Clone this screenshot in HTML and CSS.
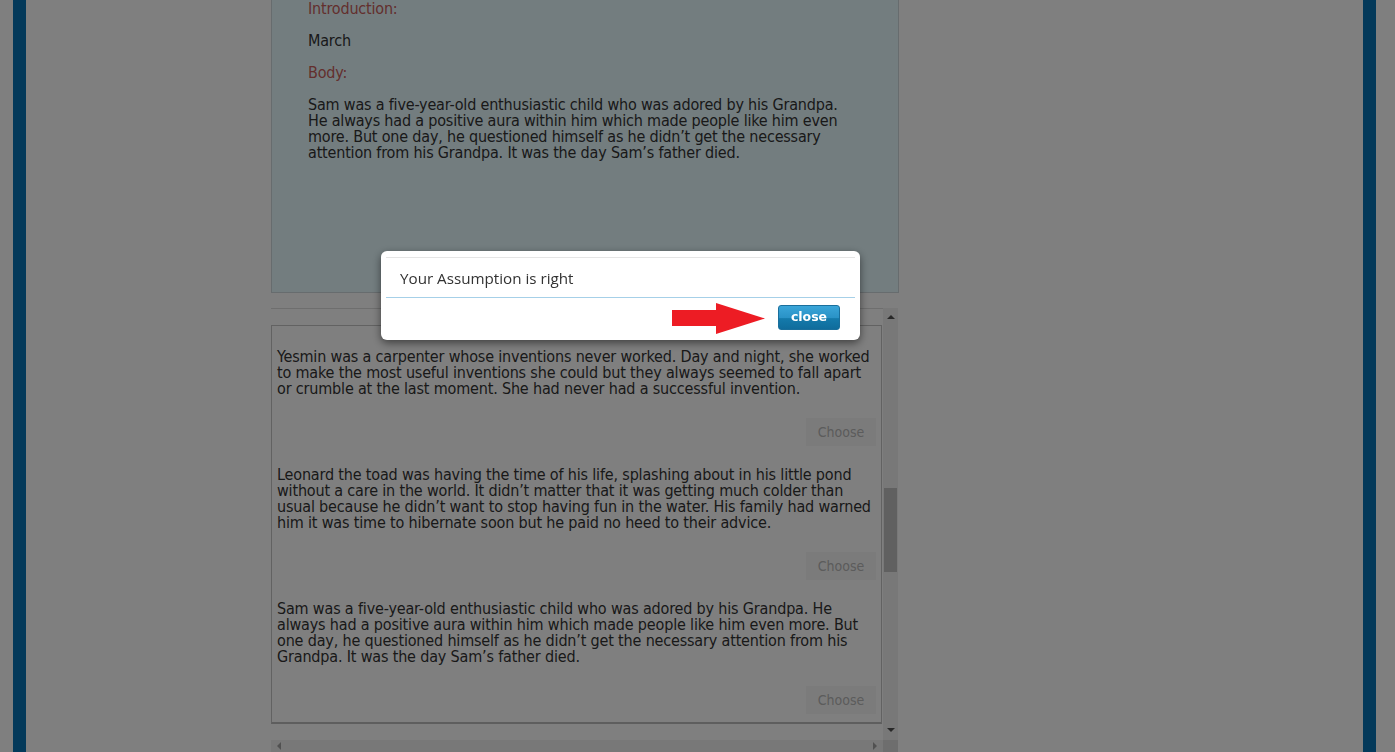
FILE: index.html
```html
<!DOCTYPE html>
<html>
<head>
<meta charset="utf-8">
<title>Story assumption</title>
<link rel="stylesheet" href="styles.css">
</head>
<body>
<div class="page">
  <div class="column">
    <section class="story">
      <p class="label">Introduction:</p>
      <p class="text">March</p>
      <p class="label">Body:</p>
      <p class="text">Sam was a five-year-old enthusiastic child who was adored by his Grandpa. He always had a positive aura within him which made people like him even more. But one day, he questioned himself as he didn’t get the necessary attention from his Grandpa. It was the day Sam’s father died.</p>
    </section>
    <section class="choices">
      <div class="choices-view">
        <div class="choice-box">
          <div class="choice">
            <p class="choice-text">Yesmin was a carpenter whose inventions never worked. Day and night, she worked to make the most useful inventions she could but they always seemed to fall apart or crumble at the last moment. She had never had a successful invention.</p>
            <div class="choice-actions"><button class="choose">Choose</button></div>
          </div>
          <div class="choice">
            <p class="choice-text">Leonard the toad was having the time of his life, splashing about in his little pond without a care in the world. It didn’t matter that it was getting much colder than usual because he didn’t want to stop having fun in the water. His family had warned him it was time to hibernate soon but he paid no heed to their advice.</p>
            <div class="choice-actions"><button class="choose">Choose</button></div>
          </div>
          <div class="choice">
            <p class="choice-text">Sam was a five-year-old enthusiastic child who was adored by his Grandpa. He always had a positive aura within him which made people like him even more. But one day, he questioned himself as he didn’t get the necessary attention from his Grandpa. It was the day Sam’s father died.</p>
            <div class="choice-actions"><button class="choose">Choose</button></div>
          </div>
        </div>
      </div>
      <div class="vscroll">
        <span class="arrow-up"></span>
        <div class="vtrack"><div class="vthumb"></div></div>
        <span class="arrow-down"></span>
      </div>
      <div class="hscroll">
        <span class="arrow-left"></span>
        <span class="arrow-right"></span>
      </div>
      <div class="corner"></div>
    </section>
  </div>
</div>

<div class="backdrop"></div>

<div class="modal">
  <div class="modal-header"></div>
  <div class="modal-body">Your Assumption is right</div>
  <div class="modal-footer">
    <svg class="pointer" width="94" height="31" viewBox="0 0 94 31" aria-hidden="true">
      <rect x="0" y="7" width="50" height="16" fill="#ed1c24"/>
      <polygon points="44,0 93,15.5 44,31" fill="#ed1c24"/>
    </svg>
    <button class="close-btn">close</button>
  </div>
</div>
</body>
</html>
```

FILE: styles.css
```css
html, body {
  margin: 0;
  padding: 0;
  background: #ffffff;
  height: 752px;
  overflow: hidden;
}

.page {
  margin: 0 19px 0 13px;
  border-left: 13px solid #0672b4;
  border-right: 13px solid #0672b4;
  height: 752px;
  background: #ffffff;
  display: flex;
  padding-left: 245px;
  box-sizing: border-box;
}

.column {
  width: 628px;
  display: flex;
  flex-direction: column;
}

.story {
  height: 293px;
  box-sizing: border-box;
  background: #e6faff;
  border: 1px solid #cfd8dc;
  border-top: none;
  padding: 1px 50px 0 36px;
  font-family: "DejaVu Sans Condensed", "DejaVu Sans", sans-serif;
  font-size: 16px;
  line-height: 16px;
  letter-spacing: -0.19px;
  color: #333;
}

.story p {
  margin: 0 0 16px 0;
}

.story .label {
  color: #c65e5a;
}

.choices {
  margin-top: 15px;
  height: 444px;
  display: grid;
  grid-template-columns: 612px 15px;
  grid-template-rows: 432px 12px;
}

.choices-view {
  border-top: 1px solid #dcdcdc;
  padding-top: 16px;
  overflow: hidden;
}

.choice-box {
  width: 611px;
  box-sizing: border-box;
  border: 1px solid #c4c4c4;
  border-bottom: 2px solid #bdbdbd;
  padding: 23px 5px 8px 5px;
  background: #ffffff;
}

.choice-text {
  margin: 0;
  font-family: "DejaVu Sans Condensed", "DejaVu Sans", sans-serif;
  font-size: 16px;
  line-height: 16px;
  letter-spacing: -0.17px;
  color: #333;
}

.choice-actions {
  display: flex;
  justify-content: flex-end;
  margin: 21px 0;
}

.choice:last-child .choice-actions {
  margin-bottom: 0;
}

.choose {
  width: 70px;
  height: 28px;
  border: none;
  background: #f7f7f7;
  color: #b8b8b8;
  font-family: "DejaVu Sans Condensed", "DejaVu Sans", sans-serif;
  font-size: 14px;
  padding: 0;
}

.vscroll {
  background: #f1f1f1;
  display: flex;
  flex-direction: column;
  align-items: center;
}

.arrow-up {
  margin-top: 7px;
  width: 0;
  height: 0;
  border-left: 4px solid transparent;
  border-right: 4px solid transparent;
  border-bottom: 4px solid #505050;
}

.vtrack {
  flex: 1;
  width: 100%;
  padding-top: 169px;
  box-sizing: border-box;
}

.vthumb {
  margin: 0 1px;
  height: 84px;
  background: #c1c1c1;
}

.arrow-down {
  margin-bottom: 8px;
  width: 0;
  height: 0;
  border-left: 4px solid transparent;
  border-right: 4px solid transparent;
  border-top: 4px solid #505050;
}

.hscroll {
  background: #f1f1f1;
  display: flex;
  align-items: center;
  justify-content: space-between;
  padding: 0 6px;
}

.arrow-left {
  width: 0;
  height: 0;
  border-top: 4px solid transparent;
  border-bottom: 4px solid transparent;
  border-right: 4px solid #a3a3a3;
}

.arrow-right {
  width: 0;
  height: 0;
  border-top: 4px solid transparent;
  border-bottom: 4px solid transparent;
  border-left: 4px solid #a3a3a3;
}

.corner {
  background: #dcdcdc;
}

.backdrop {
  position: fixed;
  inset: 0;
  background: rgba(0, 0, 0, 0.5);
}

.modal {
  position: fixed;
  left: 381px;
  top: 251px;
  width: 479px;
  height: 89px;
  box-sizing: border-box;
  background: #ffffff;
  border-radius: 6px;
  box-shadow: 0 3px 9px rgba(0, 0, 0, 0.5);
  padding: 0 5px;
  display: flex;
  flex-direction: column;
}

.modal-header {
  height: 6px;
  border-bottom: 1px solid #e5e5e5;
}

.modal-body {
  height: 40px;
  box-sizing: border-box;
  border-bottom: 1px solid #a6d0e8;
  padding-left: 14px;
  display: flex;
  align-items: center;
  font-family: "Open Sans", sans-serif;
  font-size: 15.2px;
  color: #333;
}

.modal-footer {
  display: flex;
  justify-content: flex-end;
  align-items: flex-start;
  padding: 5px 15px 0 0;
}

.pointer {
  display: block;
  margin-right: 12px;
}

.close-btn {
  margin-top: 2px;
  width: 62px;
  height: 25px;
  border: 1px solid #1a6f9c;
  border-radius: 3px;
  background: linear-gradient(to bottom, #3aa5d8 0%, #2a93c7 50%, #147aab 55%, #0f6c9c 100%);
  color: #ffffff;
  font-family: "DejaVu Sans", sans-serif;
  font-weight: bold;
  font-size: 12.5px;
  padding: 0 0 2px 0;
}
```
